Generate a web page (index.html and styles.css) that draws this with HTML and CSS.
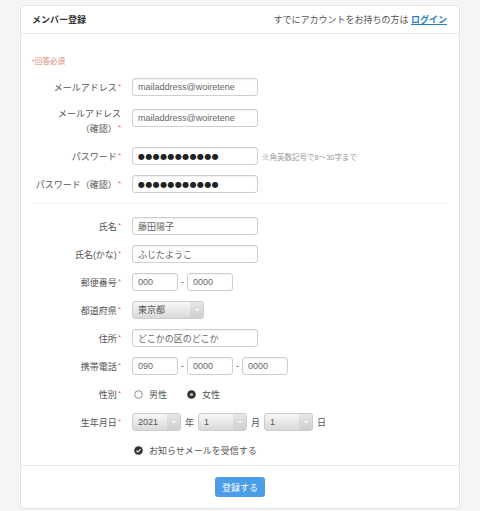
FILE: index.html
```html
<!DOCTYPE html>
<html lang="ja">
    <head>
        <meta charset="UTF-8">
        <meta name="viewport" content="width=device-width, initial-scale=1.0">
        <title>メンバー登録</title>
        <link rel="stylesheet" href="styles.css">
    </head>
    <body>
        <div class="card">
            <div class="card-header">
                <h1>メンバー登録</h1>
                <p>すでにアカウントをお持ちの方は <a href="#">ログイン</a></p>
            </div>

            <form class="card-body">
                <p class="required-note">*回答必須</p>

                <div class="form-row">
                    <label class="form-label">メールアドレス<span class="req">*</span></label>
                    <input class="text-input" type="text" value="mailaddress@woiretene">
                </div>
                <div class="form-row form-row-tall">
                    <label class="form-label">メールアドレス<br>（確認）<span class="req">*</span></label>
                    <input class="text-input" type="text" value="mailaddress@woiretene">
                </div>
                <div class="form-row">
                    <label class="form-label">パスワード<span class="req">*</span></label>
                    <input class="text-input dots" type="text" value="●●●●●●●●●●●">
                    <span class="hint">※角英数記号で8〜30字まで</span>
                </div>
                <div class="form-row">
                    <label class="form-label">パスワード（確認）<span class="req">*</span></label>
                    <input class="text-input dots" type="text" value="●●●●●●●●●●●">
                </div>

                <hr class="divider">

                <div class="form-row">
                    <label class="form-label">氏名<span class="req">*</span></label>
                    <input class="text-input" type="text" value="藤田陽子">
                </div>
                <div class="form-row">
                    <label class="form-label">氏名(かな)<span class="req">*</span></label>
                    <input class="text-input" type="text" value="ふじたようこ">
                </div>
                <div class="form-row">
                    <label class="form-label">郵便番号<span class="req">*</span></label>
                    <div class="field-group">
                        <input class="text-input short" type="text" value="000">
                        <span class="dash">-</span>
                        <input class="text-input short" type="text" value="0000">
                    </div>
                </div>
                <div class="form-row">
                    <label class="form-label">都道府県<span class="req">*</span></label>
                    <div class="select select-pref">
                        <span class="select-value">東京都</span>
                        <span class="select-arrow"></span>
                    </div>
                </div>
                <div class="form-row">
                    <label class="form-label">住所<span class="req">*</span></label>
                    <input class="text-input" type="text" value="どこかの区のどこか">
                </div>
                <div class="form-row">
                    <label class="form-label">携帯電話<span class="req">*</span></label>
                    <div class="field-group">
                        <input class="text-input short" type="text" value="090">
                        <span class="dash">-</span>
                        <input class="text-input short" type="text" value="0000">
                        <span class="dash">-</span>
                        <input class="text-input short" type="text" value="0000">
                    </div>
                </div>
                <div class="form-row">
                    <label class="form-label">性別<span class="req">*</span></label>
                    <div class="radio-group">
                        <span class="radio">
                            <svg width="9" height="9" viewBox="0 0 9 9"><circle cx="4.5" cy="4.5" r="3.8" fill="#fff" stroke="#8a8a8a" stroke-width="1"/></svg>
                            男性
                        </span>
                        <span class="radio">
                            <svg width="9" height="9" viewBox="0 0 9 9"><circle cx="4.5" cy="4.5" r="4.3" fill="#333"/><circle cx="4.5" cy="4.5" r="1.6" fill="#bbb"/></svg>
                            女性
                        </span>
                    </div>
                </div>
                <div class="form-row">
                    <label class="form-label">生年月日<span class="req">*</span></label>
                    <div class="field-group date-group">
                        <div class="select select-date">
                            <span class="select-value">2021</span>
                            <span class="select-arrow"></span>
                        </div>
                        <span class="unit">年</span>
                        <div class="select select-date">
                            <span class="select-value">1</span>
                            <span class="select-arrow"></span>
                        </div>
                        <span class="unit">月</span>
                        <div class="select select-date">
                            <span class="select-value">1</span>
                            <span class="select-arrow"></span>
                        </div>
                        <span class="unit">日</span>
                    </div>
                </div>
                <div class="form-row">
                    <span class="form-label"></span>
                    <span class="checkbox">
                        <svg width="9" height="9" viewBox="0 0 9 9"><circle cx="4.5" cy="4.5" r="4.3" fill="#333"/><path d="M2.5 4.6 L3.9 6 L6.6 3.1" fill="none" stroke="#fff" stroke-width="1.1"/></svg>
                        お知らせメールを受信する
                    </span>
                </div>
            </form>

            <div class="card-footer">
                <button type="button">登録する</button>
            </div>
        </div>
    </body>
</html>
```

FILE: styles.css
```css
* {
    margin: 0;
    padding: 0;
    box-sizing: border-box;
    font-family: 'Liberation Sans', 'Noto Sans CJK JP', sans-serif;
}

body {
    background-color: #f5f5f5;
    color: #555;
    font-size: 9px;
}

.card {
    margin: 5px 20px 0;
    background: #fff;
    border: 1px solid #e3e3e3;
    border-radius: 4px;
}

.card-header {
    display: flex;
    justify-content: space-between;
    align-items: center;
    height: 28px;
    padding: 0 12px 0 11px;
    border-bottom: 1px solid #ececec;
}

.card-header h1 {
    font-size: 9px;
    font-weight: bold;
    color: #333;
}

.card-header p {
    font-size: 9px;
    color: #555;
}

.card-header a {
    color: #2d7fc1;
    font-weight: bold;
}

.card-body {
    padding: 23px 11px 6px;
}

.required-note {
    font-size: 7.5px;
    line-height: 10px;
    color: #dd8a78;
    margin-bottom: 11px;
}

.form-row {
    display: flex;
    align-items: center;
    gap: 11px;
    min-height: 18px;
    margin-bottom: 10px;
}

.form-row:last-child {
    margin-bottom: 0;
}

.form-row-tall {
    align-items: flex-start;
}

.form-row-tall .form-label {
    line-height: 13px;
    padding: 2px 0 1px;
}

.form-row-tall .text-input {
    margin-top: 3px;
}

.form-label {
    width: 89px;
    flex-shrink: 0;
    text-align: right;
    color: #555;
    font-size: 9px;
}

.req {
    color: #e0705c;
    font-size: 8px;
    vertical-align: 2px;
    margin-left: 1px;
}

.text-input {
    width: 126px;
    height: 18px;
    padding: 0 5px;
    border: 1px solid #cfcfcf;
    border-radius: 3px;
    box-shadow: inset 0 1px 1px rgba(0, 0, 0, 0.06);
    font-size: 9px;
    color: #666;
    background: #fff;
}

.text-input.short {
    width: 46px;
}

.dots {
    font-family: 'DejaVu Sans', sans-serif;
    font-size: 8px;
    letter-spacing: 0.4px;
    color: #222;
}

.hint {
    font-size: 7.5px;
    color: #999;
    margin-left: -7px;
}

.divider {
    border: none;
    border-top: 1px solid #efefef;
    margin: 3px 0 13px;
}

.field-group {
    display: flex;
    align-items: center;
    gap: 3px;
}

.dash {
    color: #555;
}

.select {
    display: flex;
    height: 18px;
    border: 1px solid #cdcdcd;
    border-radius: 3px;
    background: linear-gradient(#f7f7f7, #d9d9d9);
    color: #555;
    overflow: hidden;
}

.select-value {
    flex: 1;
    padding: 0 5px;
    line-height: 16px;
}

.select-arrow {
    position: relative;
    width: 13px;
    background: linear-gradient(#e6e6e6, #cfcfcf);
}

.select-arrow::after {
    content: '';
    position: absolute;
    left: 5px;
    top: 7px;
    border-left: 2px solid transparent;
    border-right: 2px solid transparent;
    border-top: 2px solid #fff;
}

.select-pref {
    width: 72px;
}

.select-date {
    width: 49px;
}

.date-group {
    gap: 4px;
}

.radio-group {
    display: flex;
    align-items: center;
    gap: 18px;
}

.radio,
.checkbox {
    display: flex;
    align-items: center;
    gap: 6px;
    padding-left: 2px;
    color: #555;
}

.card-footer {
    display: flex;
    justify-content: center;
    padding: 11px 0;
    border-top: 1px solid #ececec;
}

button {
    height: 20px;
    padding: 0 7px;
    background: #4a9de6;
    color: #fff;
    border: none;
    border-radius: 3px;
    font-size: 9px;
    cursor: pointer;
}
```
